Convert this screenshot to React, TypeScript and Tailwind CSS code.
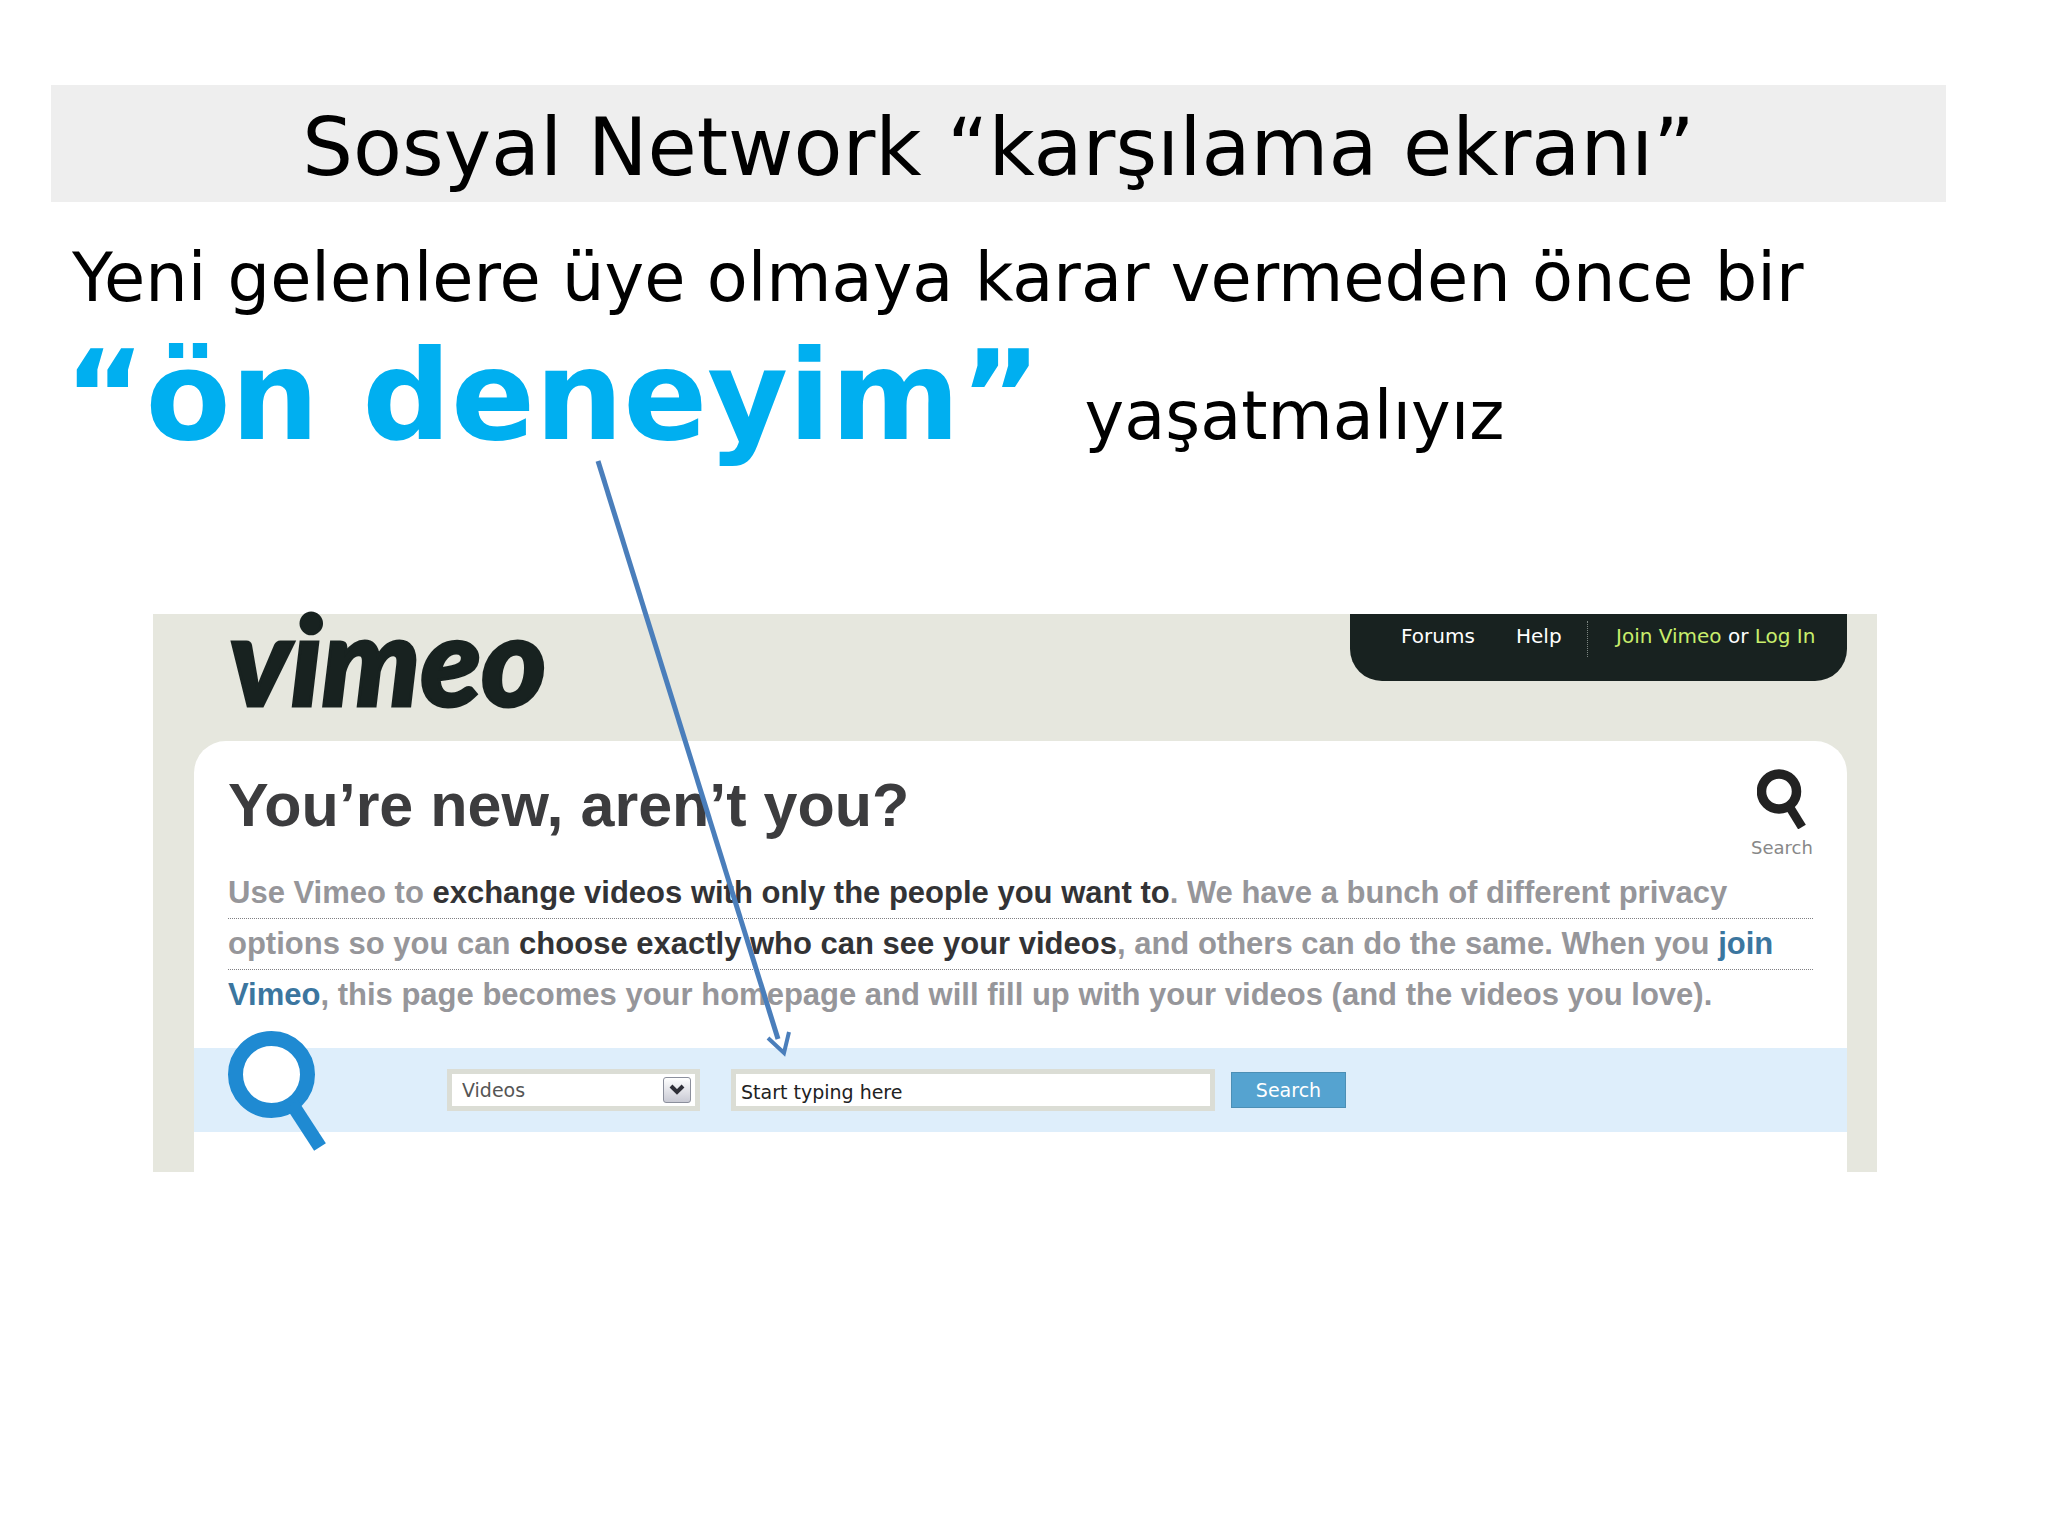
import type { ReactNode } from "react";

function Magnifier({ className }: { className: string }) {
  return (
    <svg viewBox="0 0 98 120" fill="none" stroke="currentColor" className={className} aria-hidden="true">
      <circle cx="43.5" cy="43.5" r="36" strokeWidth="15" />
      <path d="M64 73 L92 116" strokeWidth="14" />
    </svg>
  );
}

function SmallMagnifier() {
  return (
    <svg viewBox="0 0 50 60" fill="none" stroke="currentColor" className="h-[60px] w-[50px] text-[#222222]" aria-hidden="true">
      <circle cx="22" cy="22.5" r="17.5" strokeWidth="9.5" />
      <path d="M32 37 L45 58" strokeWidth="9" />
    </svg>
  );
}

function Strong({ children }: { children: ReactNode }) {
  return <strong className="font-bold text-[#333335]">{children}</strong>;
}

function TopNav() {
  return (
    <nav className="flex h-[67px] w-[497px] items-start rounded-b-[32px] bg-[#182220] pl-[51px] pt-[7px] text-[20px] leading-[30px] text-white">
      <a href="#forums" className="w-[115px]">Forums</a>
      <a href="#help" className="w-[71px]">Help</a>
      <div className="flex h-[36px] whitespace-nowrap border-l border-dotted border-[#7c8682] pl-[28px]">
        <p>
          <a href="#join" className="text-[#c8ee6c]">Join Vimeo</a> or{" "}
          <a href="#login" className="text-[#c8ee6c]">Log In</a>
        </p>
      </div>
    </nav>
  );
}

function SearchBar() {
  return (
    <form className="relative mt-[28px] flex h-[84px] items-center bg-[#deeefb] pl-[253px]">
      <Magnifier className="absolute left-[34px] top-[-17px] h-[120px] w-[98px] fill-white text-[#1f8ad2]" />
      <div className="relative mr-[31px]">
        <select
          aria-label="Search in"
          className="block h-[42px] w-[253px] appearance-none border-[5px] border-[#dbddd5] bg-white pl-[10px] text-[19px] text-[#555555] outline-none"
        >
          <option>Videos</option>
        </select>
        <span className="pointer-events-none absolute right-[9px] top-[8px] flex h-[26px] w-[28px] items-center justify-center rounded-[3px] border border-[#8b8f9c] bg-linear-to-b from-white to-[#c9cad4]">
          <svg viewBox="0 0 16 12" className="h-[12px] w-[16px]" fill="none" stroke="#303038" strokeWidth="4" aria-hidden="true">
            <path d="M2 2 L8 8 L14 2" />
          </svg>
        </span>
      </div>
      <input
        type="text"
        aria-label="Search text"
        defaultValue="Start typing here"
        className="mr-[16px] h-[42px] w-[484px] border-[5px] border-[#dbddd5] bg-white pl-[5px] pt-[4px] text-[19px] text-[#222222] outline-none"
      />
      <button type="button" className="h-[36px] w-[115px] border border-[#4c8fb5] bg-[#55a3d0] text-[19px] text-white">
        Search
      </button>
    </form>
  );
}

function VimeoPage() {
  return (
    <section className="ml-[153px] mr-[171px] mt-[125px] bg-[#e6e7de] pl-[41px] pr-[30px]">
      <header className="flex h-[127px] items-start justify-between">
        <a
          href="#home"
          className="pl-[35px] font-[Lato,sans-serif] text-[124px] font-black italic leading-[88px] text-[#182220] [-webkit-text-stroke:3px_#182220]"
        >
          vimeo
        </a>
        <TopNav />
      </header>

      <div className="rounded-t-[32px] bg-white pb-[40px]">
        <div className="flex justify-between px-[34px]">
          <h2 className="pt-[28px] font-['Liberation_Sans',sans-serif] text-[61px] font-bold leading-[72px] text-[#3c3c3e]">
            You’re new, aren’t you?
          </h2>
          <a href="#search" className="flex w-[62px] flex-col items-center gap-[7px] pt-[28px] text-[18px] leading-[24px] text-[#888888]">
            <SmallMagnifier />
            Search
          </a>
        </div>

        <div className="mt-[8px] px-[34px] font-['Liberation_Sans',sans-serif] text-[31px] font-bold leading-[50px] text-[#96969a]">
          <p className="whitespace-nowrap border-b border-dotted border-[#808084]">
            Use Vimeo to <Strong>exchange videos with only the people you want to</Strong>. We have a bunch of different privacy
          </p>
          <p className="whitespace-nowrap border-b border-dotted border-[#808084]">
            options so you can <Strong>choose exactly who can see your videos</Strong>, and others can do the same. When you{" "}
            <a href="#join" className="text-[#3b769f]">join</a>
          </p>
          <p className="whitespace-nowrap">
            <a href="#join" className="text-[#3b769f]">Vimeo</a>, this page becomes your homepage and will fill up with your videos (and the videos you love).
          </p>
        </div>

        <SearchBar />
      </div>
    </section>
  );
}

export default function App() {
  return (
    <main className="relative min-h-screen overflow-hidden bg-white pt-[85px] font-['DejaVu_Sans',sans-serif] text-black">
      <h1 className="ml-[51px] mr-[102px] h-[117px] bg-[#eeeeee] text-center text-[80px] leading-[126px]">
        Sosyal Network “karşılama ekranı”
      </h1>

      <div className="ml-[72px] mt-[30px] whitespace-nowrap text-[67px]">
        <p className="leading-[92px]">Yeni gelenlere üye olmaya karar vermeden önce bir</p>
        <p className="-ml-[8px] leading-[145px]">
          <b className="text-[124px] font-bold text-[#00aff0]">“ön deneyim” </b>yaşatmalıyız
        </p>
      </div>

      <VimeoPage />

      {/* Callout arrow from the headline down to the search field */}
      <svg
        viewBox="0 0 200 600"
        className="pointer-events-none absolute left-[594px] top-[460px] h-[600px] w-[200px]"
        fill="none"
        stroke="#4a7ebb"
        strokeWidth="5"
        aria-hidden="true"
      >
        <path d="M4 1 L184 579" />
        <path d="M174 578 L190 593 L195 572" strokeWidth="4" />
      </svg>
    </main>
  );
}
